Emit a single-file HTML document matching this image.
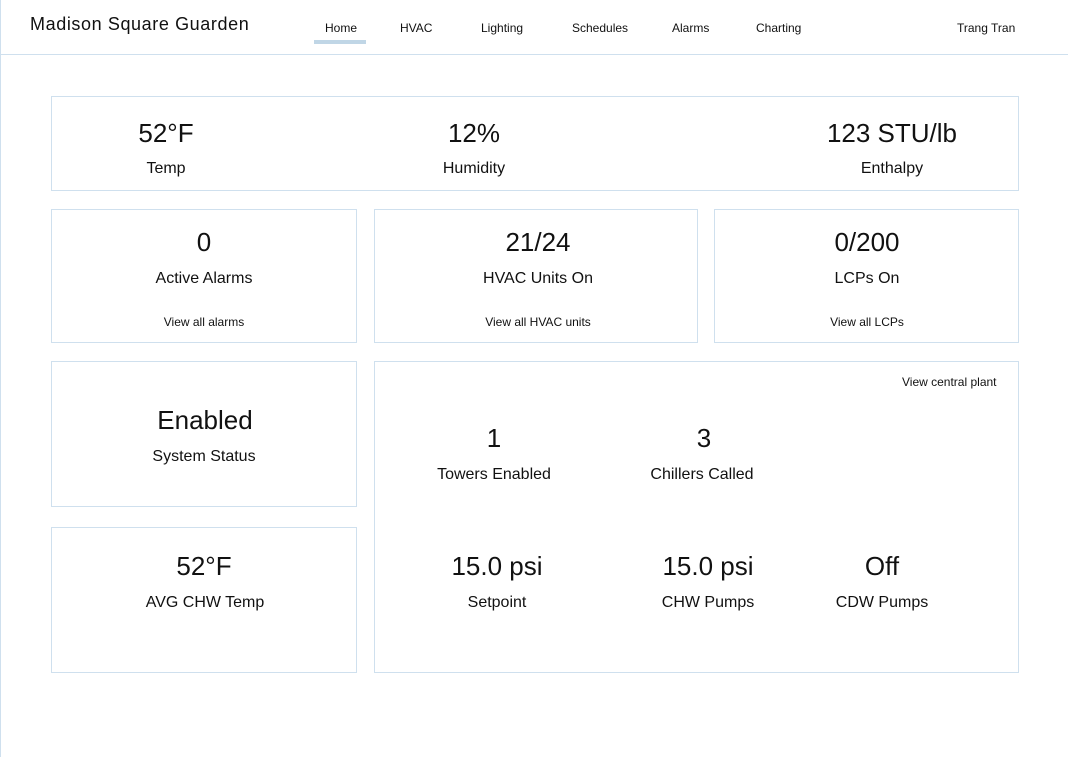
<!DOCTYPE html>
<html><head><meta charset="utf-8"><style>
body{margin:0;width:1068px;height:757px;background:#fff;font-family:"Liberation Sans",Arial,sans-serif;color:#111;position:relative;overflow:hidden}
.a{position:absolute;white-space:nowrap;line-height:1}
.c{width:300px;text-align:center}
.b{position:absolute;border:1px solid #cfe0ee;box-sizing:border-box}
.n{font-size:26px}.l{font-size:16px}.s{font-size:12px}
</style></head><body>
<div style="position:absolute;left:0;top:0;width:1px;height:757px;background:#cfe0ee"></div>
<div style="position:absolute;left:0;top:54px;width:1068px;height:1px;background:#cfe0ee"></div>
<div class="a" style="left:30px;top:15px;font-size:18px;letter-spacing:0.6px">Madison Square Guarden</div>
<div class="a s" style="left:325px;top:22px">Home</div>
<div style="position:absolute;left:314px;top:40px;width:52px;height:4px;background:#c0d6e6"></div>
<div class="a s" style="left:400px;top:22px">HVAC</div>
<div class="a s" style="left:481px;top:22px">Lighting</div>
<div class="a s" style="left:572px;top:22px">Schedules</div>
<div class="a s" style="left:672px;top:22px">Alarms</div>
<div class="a s" style="left:756px;top:22px">Charting</div>
<div class="a s" style="left:957px;top:22px">Trang Tran</div>

<div class="b" style="left:51px;top:96px;width:968px;height:95px"></div>
<div class="b" style="left:51px;top:209px;width:306px;height:134px"></div>
<div class="b" style="left:374px;top:209px;width:324px;height:134px"></div>
<div class="b" style="left:714px;top:209px;width:305px;height:134px"></div>
<div class="b" style="left:51px;top:361px;width:306px;height:146px"></div>
<div class="b" style="left:51px;top:527px;width:306px;height:146px"></div>
<div class="b" style="left:374px;top:361px;width:645px;height:312px"></div>

<div class="a c n" style="left:16px;top:120px">52°F</div>
<div class="a c l" style="left:16px;top:161px">Temp</div>
<div class="a c n" style="left:324px;top:120px">12%</div>
<div class="a c l" style="left:324px;top:161px">Humidity</div>
<div class="a c n" style="left:742px;top:120px">123 STU/lb</div>
<div class="a c l" style="left:742px;top:161px">Enthalpy</div>

<div class="a c n" style="left:54px;top:229px">0</div>
<div class="a c l" style="left:54px;top:271px">Active Alarms</div>
<div class="a c s" style="left:54px;top:316px">View all alarms</div>
<div class="a c n" style="left:388px;top:229px">21/24</div>
<div class="a c l" style="left:388px;top:271px">HVAC Units On</div>
<div class="a c s" style="left:388px;top:316px">View all HVAC units</div>
<div class="a c n" style="left:717px;top:229px">0/200</div>
<div class="a c l" style="left:717px;top:271px">LCPs On</div>
<div class="a c s" style="left:717px;top:316px">View all LCPs</div>

<div class="a c n" style="left:55px;top:407px">Enabled</div>
<div class="a c l" style="left:54px;top:449px">System Status</div>
<div class="a c n" style="left:54px;top:553px">52°F</div>
<div class="a c l" style="left:55px;top:595px">AVG CHW Temp</div>

<div class="a s" style="left:902px;top:376px">View central plant</div>
<div class="a c n" style="left:344px;top:425px">1</div>
<div class="a c l" style="left:344px;top:467px">Towers Enabled</div>
<div class="a c n" style="left:554px;top:425px">3</div>
<div class="a c l" style="left:552px;top:467px">Chillers Called</div>
<div class="a c n" style="left:347px;top:553px">15.0 psi</div>
<div class="a c l" style="left:347px;top:595px">Setpoint</div>
<div class="a c n" style="left:558px;top:553px">15.0 psi</div>
<div class="a c l" style="left:558px;top:595px">CHW Pumps</div>
<div class="a c n" style="left:732px;top:553px">Off</div>
<div class="a c l" style="left:732px;top:595px">CDW Pumps</div>
</body></html>
